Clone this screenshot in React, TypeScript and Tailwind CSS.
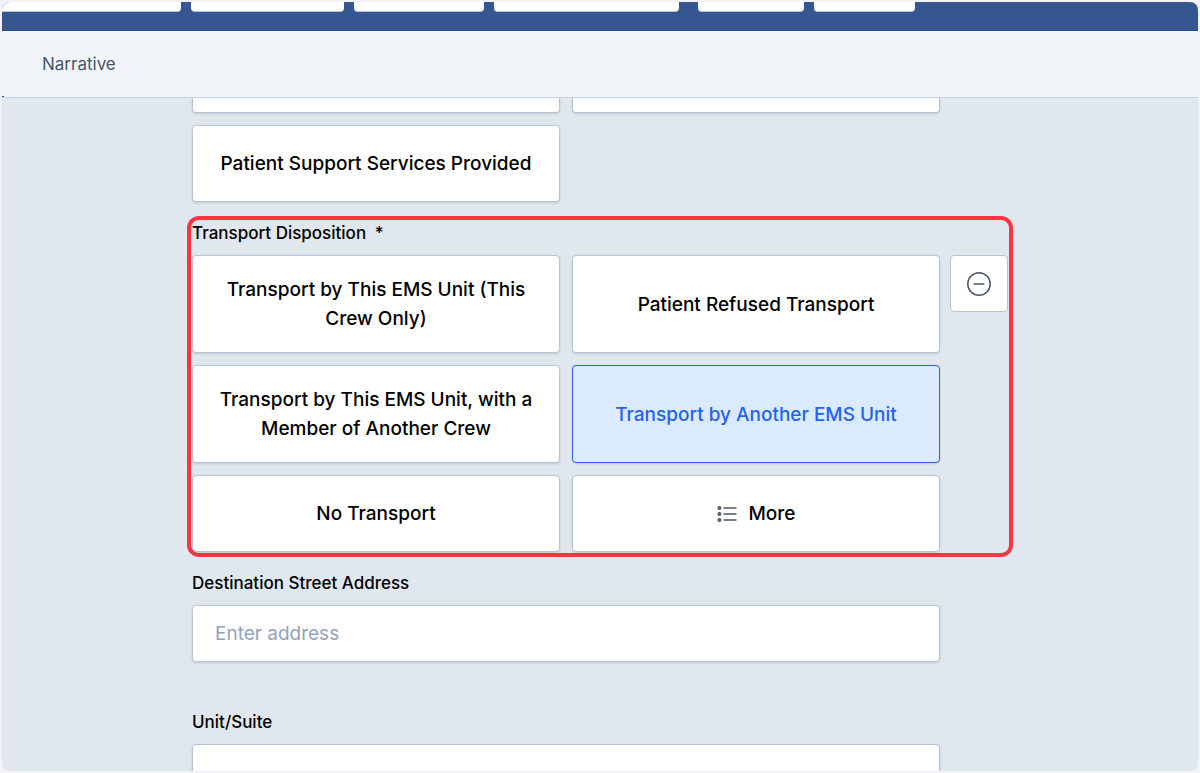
import type { ReactNode } from "react";

function OptionButton({
  children,
  selected = false,
}: {
  children: ReactNode;
  selected?: boolean;
}) {
  return (
    <button
      type="button"
      aria-pressed={selected}
      className={
        selected
          ? "flex min-h-[77px] items-center justify-center rounded border border-[#2563eb] bg-[#dbeafe] px-5 py-[19px] text-center text-[19px] font-medium leading-[29px] text-[#2563eb] shadow-sm"
          : "flex min-h-[77px] items-center justify-center rounded border border-[#b6c3d9] bg-white px-5 py-[19px] text-center text-[19px] font-medium leading-[29px] text-black shadow-sm"
      }
    >
      {children}
    </button>
  );
}

function ListIcon() {
  return (
    <svg width="20" height="18" viewBox="0 0 20 18" fill="none" stroke="#4b5568" aria-hidden="true">
      <path d="M6.5 3h13M6.5 9h13M6.5 15h13" strokeWidth="1.5" />
      <g strokeWidth="1.2" fill="#6b7485">
        <circle cx="2.4" cy="3" r="1.4" />
        <circle cx="2.4" cy="9" r="1.4" />
        <circle cx="2.4" cy="15" r="1.4" />
      </g>
    </svg>
  );
}

function MinusCircleIcon() {
  return (
    <svg width="26" height="26" viewBox="0 0 26 26" fill="none" stroke="#4b5568" strokeWidth="1.5" aria-hidden="true">
      <circle cx="13" cy="13" r="11.2" />
      <path d="M8.2 13h9.6" strokeLinecap="round" />
    </svg>
  );
}

function TopTabs() {
  const tab = "h-full rounded-b border-b border-[#b6c3d9] bg-white";
  return (
    <div className="flex h-[29px] shrink-0 border-b border-[#264a85] bg-[#35568f]" aria-hidden="true">
      <div className="flex h-[10px]">
        <div className={`${tab} w-[179px] rounded-bl-none`} />
        <div className={`${tab} ml-[10px] w-[153px]`} />
        <div className={`${tab} ml-[10px] w-[130px]`} />
        <div className={`${tab} ml-[10px] w-[185px]`} />
        <div className={`${tab} ml-[19px] w-[106px]`} />
        <div className={`${tab} ml-[10px] w-[101px]`} />
      </div>
    </div>
  );
}

export default function App() {
  const field =
    "h-[57px] w-full rounded border border-[#b6c3d9] bg-white px-[22px] text-[19px] text-black shadow-sm outline-none placeholder:text-[#94a3b8]";
  const label = "block text-[17px] font-medium leading-6 text-black";
  const stub = "h-[15px] rounded-b border border-t-0 border-[#b6c3d9] bg-white shadow-sm";
  return (
    <div className="flex h-screen flex-col bg-[#f3f2f7] p-0.5 font-['Inter','Liberation_Sans',sans-serif]">
      <div className="flex min-h-0 flex-1 flex-col overflow-hidden rounded-lg bg-[#e1e7ef]">
        <TopTabs />
        <nav className="relative flex h-[67px] shrink-0 items-center border-b border-[#c6d1e1] bg-slate-100 px-10">
          <a href="#narrative" className="text-[17px] leading-6 text-[#475569]">
            Narrative
          </a>
          <span className="absolute bottom-0 left-0 h-px w-0.5 bg-blue-700" />
        </nav>

        <main className="min-h-0 flex-1 overflow-hidden">
          <div className="mx-auto max-w-[816px]">
            <div className="mr-[68px] grid grid-cols-2 gap-3">
              <div className={stub} />
              <div className={stub} />
              <OptionButton>Patient Support Services Provided</OptionButton>
            </div>

            <section className="relative mt-[19px]" aria-labelledby="transport-disposition">
              <h2 id="transport-disposition" className={label}>
                Transport Disposition <span className="ml-1">*</span>
              </h2>
              <div className="mt-[10px] flex items-start gap-[10px]">
                <div className="grid flex-1 grid-cols-2 gap-3">
                  <OptionButton>Transport by This EMS Unit (This Crew Only)</OptionButton>
                  <OptionButton>Patient Refused Transport</OptionButton>
                  <OptionButton>Transport by This EMS Unit, with a Member of Another Crew</OptionButton>
                  <OptionButton selected>Transport by Another EMS Unit</OptionButton>
                  <OptionButton>No Transport</OptionButton>
                  <OptionButton>
                    <span className="flex items-center gap-3">
                      <ListIcon />
                      More
                    </span>
                  </OptionButton>
                </div>
                <button
                  type="button"
                  aria-label="Clear selection"
                  className="flex h-[57px] w-[58px] items-center justify-center rounded border border-[#b6c3d9] bg-white"
                >
                  <MinusCircleIcon />
                </button>
              </div>
              <div className="pointer-events-none absolute -inset-[5px] rounded-xl border-4 border-[#fa3440]" />
            </section>

            <div className="mr-[68px] mt-[19px]">
              <label htmlFor="street" className={label}>
                Destination Street Address
              </label>
              <input id="street" type="text" placeholder="Enter address" className={`${field} mt-[10px]`} />
            </div>

            <div className="mr-[68px] mt-12">
              <label htmlFor="unit" className={label}>
                Unit/Suite
              </label>
              <input id="unit" type="text" className={`${field} mt-[10px]`} />
            </div>
          </div>
        </main>
      </div>
    </div>
  );
}
